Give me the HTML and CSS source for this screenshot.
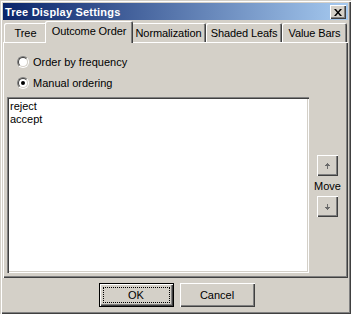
FILE: index.html
```html
<!DOCTYPE html>
<html lang="en">
<head>
    <meta charset="UTF-8">
    <title>Tree Display Settings</title>
    <link rel="stylesheet" href="styles.css">
</head>
<body>
    <div class="window">
        <div class="titlebar">
            <span class="title">Tree Display Settings</span>
            <button class="close-btn" title="Close">
                <svg width="8" height="7" viewBox="0 0 8 7">
                    <path d="M0 0h2l2 2.5L6 0h2L5 3.5 8 7H6L4 4.5 2 7H0l3-3.5z" fill="#000"/>
                </svg>
            </button>
        </div>

        <div class="tabs">
            <div class="tab tab-tree">Tree</div>
            <div class="tab tab-outcome active">Outcome Order</div>
            <div class="tab tab-norm">Normalization</div>
            <div class="tab tab-shaded">Shaded Leafs</div>
            <div class="tab tab-bars">Value Bars</div>
        </div>

        <div class="panel">
            <label class="radio-row">
                <span class="radio"><span class="radio-inner"></span></span>
                Order by frequency
            </label>
            <label class="radio-row">
                <span class="radio"><span class="radio-inner"><span class="dot"></span></span></span>
                Manual ordering
            </label>

            <div class="list-row">
                <div class="listbox">
                    <div class="item">reject</div>
                    <div class="item">accept</div>
                </div>
                <div class="move">
                    <button class="small-btn">
                        <svg width="5" height="6" viewBox="0 0 5 6">
                            <path d="M2 0h1v1h1v1h1v1H3v3H2V3H0V2h1V1h1z" fill="#6a6a6a"/>
                        </svg>
                    </button>
                    <span class="move-label">Move</span>
                    <button class="small-btn">
                        <svg width="5" height="6" viewBox="0 0 5 6">
                            <path d="M2 0h1v3h2v1H4v1H3v1H2V5H1V4H0V3h2z" fill="#6a6a6a"/>
                        </svg>
                    </button>
                </div>
            </div>
        </div>

        <div class="footer">
            <button class="btn default"><span class="focus">OK</span></button>
            <button class="btn">Cancel</button>
        </div>
    </div>
</body>
</html>
```

FILE: styles.css
```css
body {
    margin: 0;
    padding: 0;
    background: #d4d0c8;
    font-family: "Liberation Sans", Arial, sans-serif;
    font-size: 11px;
    color: #000;
}

.window {
    width: 351px;
    height: 314px;
    box-sizing: border-box;
    padding: 3px;
    background: #d4d0c8;
    box-shadow: inset 1px 1px #d4d0c8, inset 2px 2px #fff, inset -1px -1px #404040, inset -2px -2px #808080;
    display: flex;
    flex-direction: column;
}

.titlebar {
    height: 17px;
    background: linear-gradient(to right, #0a246a, #a6caf0);
    display: flex;
    align-items: center;
    justify-content: space-between;
    padding: 0 2px 0 2px;
}

.title {
    color: #fff;
    font-weight: bold;
    font-size: 11px;
    letter-spacing: 0.2px;
}

.close-btn {
    width: 16px;
    height: 14px;
    padding: 0;
    border: none;
    background: #d4d0c8;
    box-shadow: inset 1px 1px #fff, inset -1px -1px #404040, inset -2px -2px #808080;
    display: flex;
    align-items: center;
    justify-content: center;
    margin-top: 1px;
}

.tabs {
    display: flex;
    align-items: flex-end;
    height: 21px;
    margin-top: 1px;
    padding-left: 1px;
    position: relative;
    z-index: 1;
}

.tab {
    height: 19px;
    box-sizing: border-box;
    display: flex;
    align-items: center;
    justify-content: center;
    padding-top: 1px;
    letter-spacing: -0.1px;
    border-radius: 2px 2px 0 0;
    box-shadow: inset 1px 1px #fff, inset -1px 0 #404040, inset -2px 0 #808080;
    background: #d4d0c8;
}

.tab-tree { width: 43px; }
.tab-outcome { width: 84px; }
.tab-norm { width: 75px; }
.tab-shaded { width: 76px; }
.tab-bars { width: 65px; }

.tab.active {
    height: 22px;
    margin: 0 -2px -1px -2px;
    padding-top: 0;
    padding-bottom: 2px;
    width: 88px;
    position: relative;
    z-index: 2;
}

.panel {
    height: 236px;
    box-sizing: border-box;
    padding: 14px 2px 0 4px;
    box-shadow: inset 1px 1px #fff, inset -1px -1px #404040, inset -2px -2px #808080;
    display: flex;
    flex-direction: column;
    gap: 9px;
}

.radio-row {
    height: 12px;
    display: flex;
    align-items: center;
    gap: 4px;
    padding-left: 10px;
}

.radio {
    width: 12px;
    height: 12px;
    box-sizing: border-box;
    border-radius: 50%;
    border: 1px solid;
    border-color: #808080 #fff #fff #808080;
}

.radio-inner {
    display: flex;
    align-items: center;
    justify-content: center;
    width: 10px;
    height: 10px;
    box-sizing: border-box;
    border-radius: 50%;
    border: 1px solid;
    border-color: #404040 #d4d0c8 #d4d0c8 #404040;
    background: #fff;
}

.dot {
    width: 4px;
    height: 4px;
    border-radius: 50%;
    background: #000;
}

.list-row {
    display: flex;
    align-items: center;
    margin-top: -1px;
}

.listbox {
    width: 302px;
    height: 176px;
    box-sizing: border-box;
    background: #fff;
    padding: 3px 3px;
    box-shadow: inset 1px 1px #808080, inset 2px 2px #404040, inset -1px -1px #fff, inset -2px -2px #d4d0c8;
}

.item {
    height: 13px;
    line-height: 13px;
}

.move {
    flex: 1;
    display: flex;
    flex-direction: column;
    align-items: center;
    gap: 4px;
    padding-top: 2px;
}

.small-btn {
    width: 21px;
    height: 21px;
    padding: 0;
    border: none;
    background: #d4d0c8;
    box-shadow: inset 1px 1px #fff, inset -1px -1px #404040, inset -2px -2px #808080;
    display: flex;
    align-items: center;
    justify-content: center;
}

.move-label {
    line-height: 12px;
}

.footer {
    flex: 1;
    display: flex;
    justify-content: center;
    align-items: flex-start;
    gap: 6px;
    padding: 5px 0 0 2px;
}

.btn {
    width: 75px;
    height: 24px;
    padding: 0;
    border: none;
    background: #d4d0c8;
    font-family: "Liberation Sans", Arial, sans-serif;
    font-size: 11px;
    color: #000;
    box-shadow: inset 1px 1px #fff, inset -1px -1px #404040, inset -2px -2px #808080;
    display: flex;
    align-items: center;
    justify-content: center;
}

.btn.default {
    box-shadow: inset 0 0 0 1px #000, inset 2px 2px #fff, inset -2px -2px #404040, inset -3px -3px #808080;
    padding: 4px;
}

.focus {
    flex: 1;
    align-self: stretch;
    display: flex;
    align-items: center;
    justify-content: center;
    border: 1px dotted #000;
}
```
